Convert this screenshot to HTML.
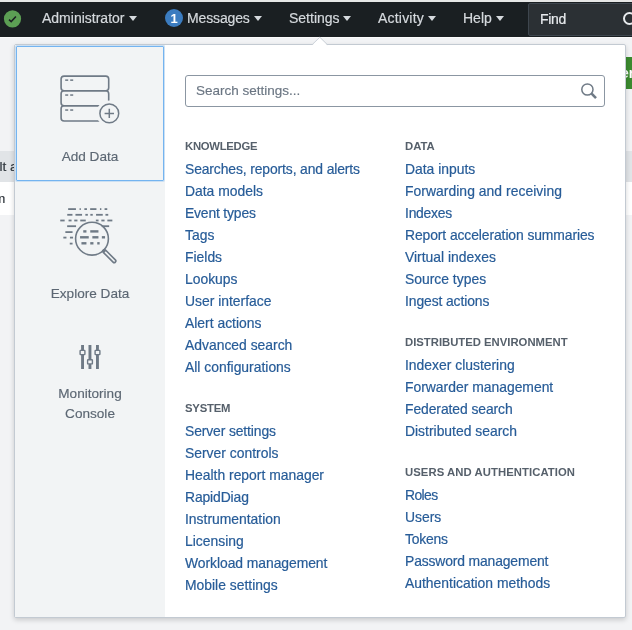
<!DOCTYPE html>
<html><head><meta charset="utf-8">
<style>
*{box-sizing:border-box;margin:0;padding:0}
html,body{width:632px;height:630px;overflow:hidden;background:#f2f3f5;font-family:"Liberation Sans",sans-serif}
#wrap{position:absolute;left:0;top:0;width:632px;height:630px;will-change:transform}
.abs{position:absolute}
#strip{left:0;top:0;width:632px;height:2px;background:#e6e7e6}
#nav{left:0;top:2px;width:632px;height:35px;background:#1a1f22}
.nt{position:absolute;top:-1px;height:35px;line-height:35px;font-size:14px;color:#d5d9dd;-webkit-text-stroke:0.2px currentColor;white-space:nowrap}
.car{position:absolute;width:0;height:0;border-left:4px solid transparent;border-right:4px solid transparent;border-top:5px solid #d5d9dd}
#find{left:528px;top:3px;width:110px;height:33px;background:#2b3034;border:1px solid #3e464e;border-radius:2px}
#rowg{left:0;top:151px;width:632px;height:31px;background:#e1e4e7}
#roww{left:0;top:182px;width:632px;height:33px;background:#fff}
#green{left:620px;top:57px;width:20px;height:32px;background:#3b8a2f;border-radius:3px}
#panel{left:14px;top:44px;width:612px;height:574px;border:1px solid #c3cad2;border-radius:2px;background:#fff;box-shadow:0 2px 5px rgba(0,0,0,.17)}
#lcol{position:absolute;left:0;top:0;width:150px;height:572px;background:#f2f4f5}
#tile{position:absolute;left:1px;top:1px;width:148px;height:135px;border:1px solid #74b4f0;border-radius:1px;box-shadow:0 0 0 1px rgba(116,180,240,.3)}
.lbl{position:absolute;left:0;width:150px;text-align:center;font-size:13.6px;line-height:20px;color:#5c6773;-webkit-text-stroke:0.15px currentColor;white-space:nowrap}
.hd{font-size:11.3px;font-weight:bold;color:#56606b;line-height:16px;height:16px;white-space:nowrap;margin-bottom:4px}
.lk{font-size:13.9px;color:#275c98;-webkit-text-stroke:0.2px #275c98;line-height:22px;height:22px;white-space:nowrap}
</style></head><body><div id="wrap">
<div id="strip" class="abs"></div>
<div id="nav" class="abs">
  <svg class="abs" style="left:0;top:0" width="30" height="35" viewBox="0 2 30 35"><circle cx="12.5" cy="18.8" r="8.6" fill="#5c9f54"/><path d="M9 19.6L11.2 21.6L15.9 16.6" fill="none" stroke="#1b1f22" stroke-width="1.5"/></svg>
  <div class="nt" style="left:42px">Administrator</div>
  <div class="car" style="left:129px;top:14px"></div>
  <div class="abs" style="left:165px;top:7px;width:18px;height:18px;border-radius:50%;background:#3b7cc0;color:#fff;font-size:13px;font-weight:bold;line-height:19px;text-align:center">1</div>
  <div class="nt" style="left:187px;letter-spacing:-0.14px">Messages</div>
  <div class="car" style="left:254px;top:14px"></div>
  <div class="nt" style="left:289px">Settings</div>
  <div class="car" style="left:343px;top:14px"></div>
  <div class="nt" style="left:378px;letter-spacing:0.2px">Activity</div>
  <div class="car" style="left:428px;top:14px"></div>
  <div class="nt" style="left:463px">Help</div>
  <div class="car" style="left:496px;top:14px"></div>
</div>
<div id="find" class="abs"><div class="nt" style="left:11px;top:-2px;color:#e8ebee;letter-spacing:-0.3px">Find</div>
  <div class="abs" style="left:94px;top:8px;width:13px;height:13px;border:2px solid #e8ebee;border-radius:50%"></div></div>
<div class="abs" style="left:0;top:37px;width:632px;height:1px;background:#fbfbfb"></div>
<div id="rowg" class="abs"></div>
<div id="roww" class="abs"></div>
<div class="abs" style="left:-0.5px;top:157px;font-size:13.6px;line-height:20px;color:#2f363d;-webkit-text-stroke:0.2px #2f363d;white-space:nowrap">lt a</div>
<div class="abs" style="left:-6px;top:189px;font-size:13.6px;line-height:20px;color:#2f363d;-webkit-text-stroke:0.2px #2f363d;white-space:nowrap">m</div>
<div id="green" class="abs"><div class="abs" style="left:1px;top:6px;font-size:14px;font-weight:bold;color:#fff;line-height:20px">er</div></div>

<div id="panel" class="abs">
  <div id="lcol">
    <div id="tile"></div>
    <div class="lbl" style="top:102px">Add Data</div>
    <div class="lbl" style="top:239px">Explore Data</div>
    <div class="lbl" style="top:339px">Monitoring<br>Console</div>
  </div>
  <div class="abs" style="left:170px;top:30px;width:420px;height:32px;border:1px solid #8b96a2;border-radius:3px"></div>
  <div class="abs" style="left:181px;top:36px;font-size:13.5px;line-height:20px;color:#6b7683;-webkit-text-stroke:0.15px #6b7683;white-space:nowrap">Search settings...</div>
  <div class="abs" style="left:170px;top:93px"><div class="hd" style="letter-spacing:-0.263px">KNOWLEDGE</div><div class="lk" style="letter-spacing:-0.118px">Searches, reports, and alerts</div><div class="lk">Data models</div><div class="lk" style="letter-spacing:-0.170px">Event types</div><div class="lk">Tags</div><div class="lk">Fields</div><div class="lk">Lookups</div><div class="lk">User interface</div><div class="lk">Alert actions</div><div class="lk">Advanced search</div><div class="lk">All configurations</div><div class="hd" style="margin-top:22px;letter-spacing:-0.200px">SYSTEM</div><div class="lk" style="letter-spacing:-0.121px">Server settings</div><div class="lk">Server controls</div><div class="lk">Health report manager</div><div class="lk" style="letter-spacing:-0.125px">RapidDiag</div><div class="lk">Instrumentation</div><div class="lk">Licensing</div><div class="lk" style="letter-spacing:-0.056px">Workload management</div><div class="lk">Mobile settings</div></div>
  <div class="abs" style="left:390px;top:93px"><div class="hd">DATA</div><div class="lk">Data inputs</div><div class="lk" style="letter-spacing:0.043px">Forwarding and receiving</div><div class="lk" style="letter-spacing:-0.233px">Indexes</div><div class="lk" style="letter-spacing:-0.096px">Report acceleration summaries</div><div class="lk">Virtual indexes</div><div class="lk">Source types</div><div class="lk" style="letter-spacing:-0.100px">Ingest actions</div><div class="hd" style="margin-top:22px">DISTRIBUTED ENVIRONMENT</div><div class="lk">Indexer clustering</div><div class="lk">Forwarder management</div><div class="lk" style="letter-spacing:-0.080px">Federated search</div><div class="lk">Distributed search</div><div class="hd" style="margin-top:22px;letter-spacing:0.070px">USERS AND AUTHENTICATION</div><div class="lk" style="letter-spacing:-0.575px">Roles</div><div class="lk">Users</div><div class="lk" style="letter-spacing:-0.200px">Tokens</div><div class="lk" style="letter-spacing:-0.139px">Password management</div><div class="lk">Authentication methods</div></div>
</div>
<svg class="abs" style="left:0;top:0;pointer-events:none" width="632" height="630" viewBox="0 0 632 630">
 <g fill="none" stroke="#6f7a86" stroke-width="1.6">
  <rect x="61.1" y="76.1" width="47.6" height="14.6" rx="3"/>
  <rect x="61.1" y="90.8" width="47.6" height="15" rx="3"/>
  <rect x="61.1" y="105.8" width="47.6" height="15.2" rx="3"/>
 </g>
 <circle cx="109.3" cy="113.4" r="13" fill="#f2f4f5"/>
 <g fill="none" stroke="#6f7a86" stroke-width="1.5">
  <circle cx="109.3" cy="113.4" r="9.4"/>
  <path d="M104.6 113.4H114M109.3 108.7V118.1"/>
 </g>
 <g fill="#6f7a86">
  <rect x="65.2" y="79.4" width="3" height="1.5"/><rect x="70.2" y="79.4" width="3" height="1.5"/>
  <rect x="65.2" y="94.3" width="3" height="1.5"/><rect x="70.2" y="94.3" width="3" height="1.5"/>
  <rect x="65.2" y="109.3" width="3" height="1.5"/><rect x="70.2" y="109.3" width="3" height="1.5"/>
 </g>
 <g fill="#6f7a86"><rect x="68.15" y="208.20" width="7.80" height="1.8"/><rect x="79.55" y="208.20" width="1.30" height="1.8"/><rect x="84.35" y="208.20" width="2.60" height="1.8"/><rect x="90.15" y="208.20" width="6.30" height="1.8"/><rect x="99.95" y="208.20" width="1.40" height="1.8"/><rect x="104.55" y="208.20" width="2.70" height="1.8"/><rect x="67.25" y="213.90" width="5.20" height="1.8"/><rect x="75.45" y="213.90" width="6.60" height="1.8"/><rect x="85.35" y="213.90" width="2.50" height="1.8"/><rect x="90.35" y="213.90" width="2.40" height="1.8"/><rect x="96.05" y="213.90" width="6.70" height="1.8"/><rect x="105.45" y="213.90" width="2.80" height="1.8"/><rect x="60.25" y="219.60" width="4.40" height="1.8"/><rect x="68.55" y="219.60" width="3.00" height="1.8"/><rect x="74.25" y="219.60" width="3.20" height="1.8"/><rect x="80.25" y="219.60" width="5.50" height="1.8"/><rect x="95.85" y="219.60" width="2.70" height="1.8"/><rect x="101.35" y="219.60" width="3.20" height="1.8"/><rect x="107.35" y="219.60" width="5.00" height="1.8"/><rect x="67.15" y="225.30" width="8.90" height="1.8"/><rect x="101.75" y="225.30" width="7.40" height="1.8"/><rect x="65.35" y="231.20" width="7.20" height="1.8"/><rect x="63.35" y="236.70" width="3.10" height="1.8"/><rect x="69.95" y="236.70" width="3.10" height="1.8"/><rect x="69.75" y="242.70" width="2.80" height="1.8"/><rect x="83.25" y="230.20" width="3.20" height="2.4"/><rect x="90.25" y="230.20" width="8.20" height="2.4"/><rect x="80.05" y="236.10" width="8.70" height="2.4"/><rect x="92.35" y="236.10" width="6.10" height="2.4"/><rect x="101.85" y="236.10" width="3.20" height="2.4"/><rect x="81.45" y="242.10" width="5.00" height="2.4"/><rect x="90.25" y="242.10" width="3.20" height="2.4"/><rect x="97.25" y="242.10" width="2.40" height="2.4"/></g>
 <circle cx="92" cy="238.7" r="16.4" fill="none" stroke="#6f7a86" stroke-width="1.6"/>
 <path d="M104.4 251.2L114.2 261" stroke="#6f7a86" stroke-width="4.8" stroke-linecap="round"/>
 <path d="M105.6 252.4L114.2 261" stroke="#f2f4f5" stroke-width="1.6" stroke-linecap="round"/>
 <g fill="#6f7a86">
  <rect x="81.1" y="345" width="2.9" height="24"/>
  <rect x="88.5" y="345" width="2.9" height="24"/>
  <rect x="96" y="345" width="2.9" height="24"/>
 </g>
 <g fill="#f2f4f5" stroke="#6f7a86" stroke-width="1.4">
  <rect x="80.1" y="350.4" width="4.8" height="4.2" rx="0.5"/>
  <rect x="87.6" y="359.7" width="4.8" height="4.2" rx="0.5"/>
  <rect x="95.1" y="350.4" width="4.8" height="4.2" rx="0.5"/>
 </g>
</svg>
<svg class="abs" style="left:0;top:0;pointer-events:none" width="632" height="630" viewBox="0 0 632 630">
 <path d="M312 45.5L319.8 37.7L327.6 45.5Z" fill="#fff"/>
 <circle cx="587.4" cy="89.5" r="5.6" fill="none" stroke="#6f7a86" stroke-width="1.5"/>
 <path d="M591.6 93.7L596 98.1" stroke="#6f7a86" stroke-width="2.6" stroke-linecap="butt"/>
 <path d="M312.3 44.5L319.8 37.2L327.3 44.5" fill="none" stroke="#cbd1d8" stroke-width="1"/>
</svg>
</div></body></html>
